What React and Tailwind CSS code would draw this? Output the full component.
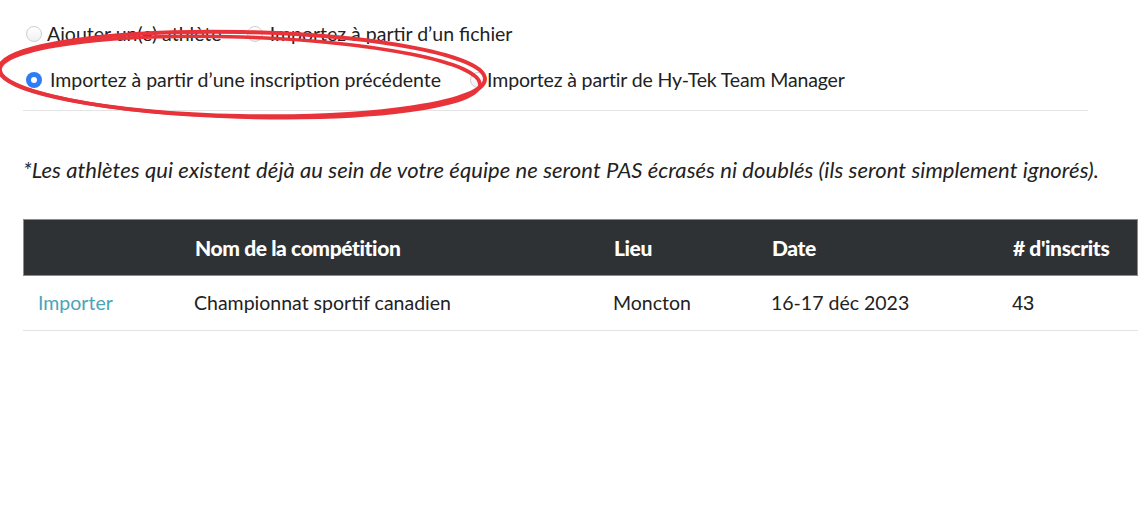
import React from "react";

function Radio({ checked }) {
  if (checked) {
    return (
      <span className="inline-flex h-[16px] w-[16px] shrink-0 items-center justify-center rounded-full bg-[#2f7df6]">
        <span className="h-[6px] w-[6px] rounded-full bg-white" />
      </span>
    );
  }
  return (
    <span className="inline-block h-[16px] w-[16px] shrink-0 rounded-full border border-[#cfcfcf] bg-gradient-to-b from-white to-[#f1f1f1]" />
  );
}

export default function App() {
  return (
    <div
      className="relative h-[532px] w-[1138px] overflow-hidden bg-white text-[#222]"
      style={{ fontFamily: "Lato, 'Open Sans', sans-serif" }}
    >
      <div className="pl-[26px] pt-[21px] text-[19.5px] leading-[26px]">
        <div className="flex items-center">
          <label className="flex items-center gap-[5px]">
            <Radio />
            <span>Ajouter un(e) athlète</span>
          </label>
          <label className="ml-[25px] flex items-center gap-[7px]">
            <Radio />
            <span>Importez à partir d’un fichier</span>
          </label>
        </div>
        <div className="mt-[20px] flex items-center">
          <label className="flex items-center gap-[8px]">
            <Radio checked />
            <span>Importez à partir d’une inscription précédente</span>
          </label>
          <label className="ml-[29px] flex items-center gap-[1px]">
            <Radio />
            <span className="tracking-[-0.15px]">Importez à partir de Hy-Tek Team Manager</span>
          </label>
        </div>
      </div>
      <div className="ml-[23px] mt-[17px] h-px w-[1065px] bg-[#e3e3e3]" />

      <p className="ml-[23px] mt-[45px] text-[22px] italic leading-[28px] tracking-[0.07px]">
        *Les athlètes qui existent déjà au sein de votre équipe ne seront PAS écrasés ni doublés (ils seront simplement ignorés).
      </p>

      <div className="ml-[23px] mt-[35px] w-[1115px]">
        <div className="grid h-[57px] grid-cols-[171px_419px_158px_241px_1fr] items-center border border-[#8a8d8f] bg-[#2e3234] text-[21px] font-black tracking-[-0.4px] text-white">
          <div />
          <div>Nom de la compétition</div>
          <div>Lieu</div>
          <div>Date</div>
          <div>
            # d'inscrits
          </div>
        </div>
        <div className="grid h-[55px] grid-cols-[171px_419px_158px_241px_1fr] items-center border-b border-[#e3e3e3] text-[19.5px]">
          <div className="pl-[15px] text-[#4ba3b8]">Importer</div>
          <div>Championnat sportif canadien</div>
          <div>Moncton</div>
          <div>16-17 déc 2023</div>
          <div className="text-[20px]" style={{ fontFamily: "'Liberation Sans', Arial, sans-serif" }}>43</div>
        </div>
      </div>

      <svg
        className="pointer-events-none absolute left-0 top-0"
        width="1138"
        height="532"
        viewBox="0 0 1138 532"
      >
        <ellipse
          cx="242"
          cy="74"
          rx="243"
          ry="42"
          transform="rotate(1.2 242 74)"
          fill="none"
          stroke="#e8333a"
          strokeWidth="4"
        />
        <ellipse
          cx="240"
          cy="77"
          rx="240"
          ry="40"
          transform="rotate(1.8 240 77)"
          fill="none"
          stroke="#e8333a"
          strokeWidth="3.5"
        />
      </svg>
    </div>
  );
}
